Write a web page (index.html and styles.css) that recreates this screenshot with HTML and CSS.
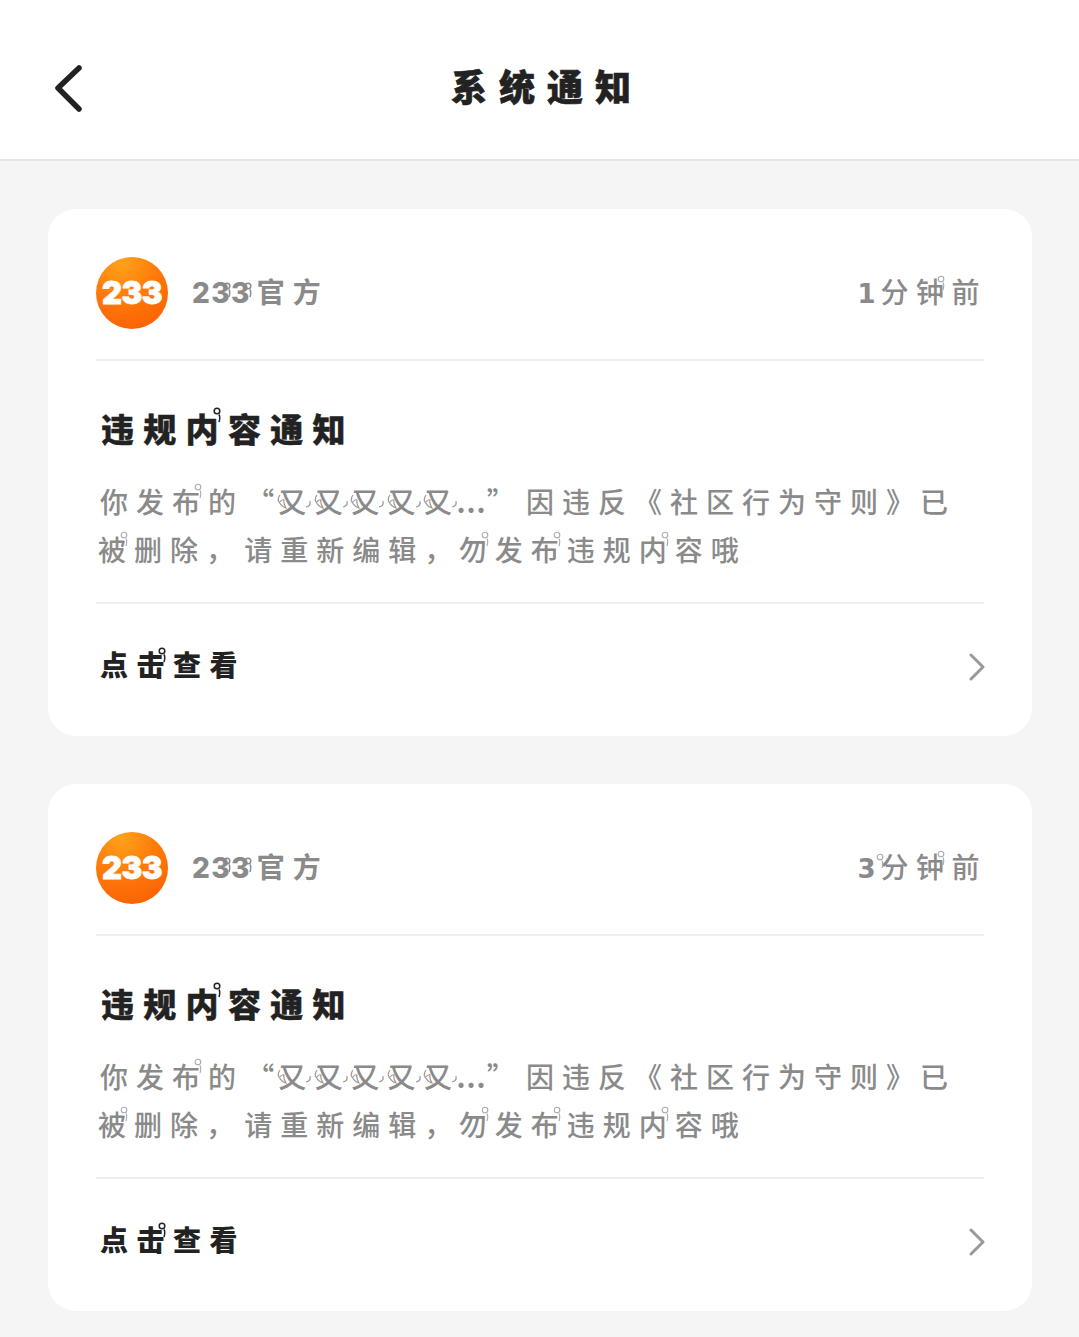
FILE: index.html
```html
<!DOCTYPE html>
<html lang="zh-CN">
<head>
<meta charset="utf-8">
<title>系统通知</title>
<link rel="stylesheet" href="styles.css">
</head>
<body>
<svg class="defs" width="0" height="0" aria-hidden="true">
  <symbol id="flower" viewBox="0 0 10 16">
    <circle cx="5" cy="4" r="2.8" fill="none" stroke="currentColor"/>
    <path d="M7 7.5 Q8.5 10 7 15" fill="none" stroke="currentColor"/>
  </symbol>
  <symbol id="swirl" viewBox="0 0 36 24">
    <path d="M3 2 Q0 6 2 9 Q5 14 9 15 Q6 10 7 7 Q5 6 3 9" fill="none" stroke="#999" stroke-width="1.2"/>
    <path d="M29 14 Q34 13 33 8" fill="none" stroke="#999" stroke-width="1.2"/>
  </symbol>
</svg>

<header class="topbar">
  <svg class="back" width="34" height="50" viewBox="0 0 34 50"><path d="M27 5 L6 25 L27 46" fill="none" stroke="#222" stroke-width="5.5" stroke-linecap="round" stroke-linejoin="round"/></svg>
  <h1 class="page-title">系统通知</h1>
</header>

<main class="list">
  <article class="card">
    <div class="card-head">
      <div class="logo">233</div>
      <div class="source"><span class="digits">23<i class="deco d-src1"><svg><use href="#flower"/></svg></i>3<i class="deco d-src2"><svg><use href="#flower"/></svg></i></span>官方</div>
      <div class="time"><span class="num">1</span>分钟<i class="deco d-time"><svg><use href="#flower"/></svg></i>前</div>
    </div>
    <div class="card-body">
      <h2 class="notice-title">违规内<i class="deco d-title"><svg><use href="#flower"/></svg></i>容通知</h2>
      <p class="notice-text">你发布<i class="deco d-text"><svg><use href="#flower"/></svg></i>的 <span class="quote-open">“</span><span class="yo"><i class="deco d-swirl"><svg><use href="#swirl"/></svg></i>又</span><span class="yo"><i class="deco d-swirl"><svg><use href="#swirl"/></svg></i>又</span><span class="yo"><i class="deco d-swirl"><svg><use href="#swirl"/></svg></i>又</span><span class="yo"><i class="deco d-swirl"><svg><use href="#swirl"/></svg></i>又</span><span class="yo yo-last"><i class="deco d-swirl"><svg><use href="#swirl"/></svg></i>又</span><span class="dots">...</span><span class="quote-close">”</span> 因违反《社区行为守则<span class="bracket">》</span>已<br><span class="line2">被<i class="deco d-text"><svg><use href="#flower"/></svg></i>删除， 请重新编辑<span class="comma">，</span> 勿<i class="deco d-text"><svg><use href="#flower"/></svg></i>发布<i class="deco d-text"><svg><use href="#flower"/></svg></i>违规内<i class="deco d-text"><svg><use href="#flower"/></svg></i>容哦</span></p>
    </div>
    <div class="card-foot">
      <span class="action">点击<i class="deco d-action"><svg><use href="#flower"/></svg></i>查看</span>
      <svg class="chev" width="18" height="28" viewBox="0 0 18 28"><path d="M3 2 L15 14 L3 26" fill="none" stroke="#999" stroke-width="3" stroke-linecap="round" stroke-linejoin="round"/></svg>
    </div>
  </article>

  <article class="card">
    <div class="card-head">
      <div class="logo">233</div>
      <div class="source"><span class="digits">23<i class="deco d-src1"><svg><use href="#flower"/></svg></i>3<i class="deco d-src2"><svg><use href="#flower"/></svg></i></span>官方</div>
      <div class="time"><span class="num">3<i class="deco d-num"><svg><use href="#flower"/></svg></i></span>分钟<i class="deco d-time"><svg><use href="#flower"/></svg></i>前</div>
    </div>
    <div class="card-body">
      <h2 class="notice-title">违规内<i class="deco d-title"><svg><use href="#flower"/></svg></i>容通知</h2>
      <p class="notice-text">你发布<i class="deco d-text"><svg><use href="#flower"/></svg></i>的 <span class="quote-open">“</span><span class="yo"><i class="deco d-swirl"><svg><use href="#swirl"/></svg></i>又</span><span class="yo"><i class="deco d-swirl"><svg><use href="#swirl"/></svg></i>又</span><span class="yo"><i class="deco d-swirl"><svg><use href="#swirl"/></svg></i>又</span><span class="yo"><i class="deco d-swirl"><svg><use href="#swirl"/></svg></i>又</span><span class="yo yo-last"><i class="deco d-swirl"><svg><use href="#swirl"/></svg></i>又</span><span class="dots">...</span><span class="quote-close">”</span> 因违反《社区行为守则<span class="bracket">》</span>已<br><span class="line2">被<i class="deco d-text"><svg><use href="#flower"/></svg></i>删除， 请重新编辑<span class="comma">，</span> 勿<i class="deco d-text"><svg><use href="#flower"/></svg></i>发布<i class="deco d-text"><svg><use href="#flower"/></svg></i>违规内<i class="deco d-text"><svg><use href="#flower"/></svg></i>容哦</span></p>
    </div>
    <div class="card-foot">
      <span class="action">点击<i class="deco d-action"><svg><use href="#flower"/></svg></i>查看</span>
      <svg class="chev" width="18" height="28" viewBox="0 0 18 28"><path d="M3 2 L15 14 L3 26" fill="none" stroke="#999" stroke-width="3" stroke-linecap="round" stroke-linejoin="round"/></svg>
    </div>
  </article>
</main>
</body>
</html>
```

FILE: styles.css
```css
* { box-sizing: border-box; }
html, body { margin: 0; padding: 0; }
body {
  width: 1079px;
  height: 1337px;
  overflow: hidden;
  background: #f5f5f5;
  font-family: "Noto Sans CJK SC", "Noto Sans", sans-serif;
}
.defs { position: absolute; }

.topbar {
  position: relative;
  height: 161px;
  padding-top: 10px;
  background: #fff;
  border-bottom: 2px solid #e6e6e6;
  display: flex;
  align-items: center;
  justify-content: center;
}
.back { position: absolute; left: 52px; top: 63px; }
.page-title {
  margin: 0 0 0 15px;
  font-size: 36px;
  line-height: 50px;
  font-weight: 900;
  letter-spacing: 12px;
  color: #222;
  -webkit-text-stroke: 0.6px #222;
}

.list {
  padding: 48px 47px 0 48px;
  display: flex;
  flex-direction: column;
  gap: 48px;
}
.card {
  height: 527px;
  background: #fff;
  border-radius: 28px;
  padding: 48px 48px 0;
}
.card-head {
  display: flex;
  align-items: center;
  height: 104px;
  padding-bottom: 30px;
  border-bottom: 2px solid #eee;
}
.logo {
  width: 72px;
  height: 72px;
  flex: none;
  border-radius: 50%;
  background: radial-gradient(circle at 35% 8%, #ffa21a 0%, #ff7a0a 45%, #f95a00 100%);
  color: #fff;
  font-family: Inter, "Noto Sans", sans-serif;
  font-weight: 900;
  font-size: 31px;
  line-height: 72px;
  text-align: center;
  letter-spacing: -0.5px;
  -webkit-text-stroke: 0.8px #fff;
}
.source {
  margin-left: 24px;
  margin-top: -2px;
  font-size: 28px;
  line-height: 40px;
  font-weight: 700;
  letter-spacing: 8px;
  color: #8a8a8a;
}
.digits {
  font-family: Inter, sans-serif;
  font-weight: 800;
  letter-spacing: 1.4px;
  margin-right: 6px;
}
.time {
  margin-left: auto;
  margin-right: -3px;
  margin-top: -1px;
  font-size: 28px;
  line-height: 40px;
  font-weight: 500;
  letter-spacing: 7.5px;
  color: #8a8a8a;
}
.num { font-family: "DejaVu Sans", sans-serif; font-weight: 700; font-size: 26px; letter-spacing: 5px; }

.card-body {
  height: 243px;
  padding: 44px 0 0 5px;
  border-bottom: 2px solid #eee;
}
.notice-title {
  margin: 0;
  font-size: 33px;
  line-height: 46px;
  font-weight: 900;
  letter-spacing: 9.3px;
  color: #222;
  -webkit-text-stroke: 0.4px #222;
}
.notice-text {
  margin: 26px 0 0 -1px;
  font-size: 28px;
  line-height: 48px;
  font-weight: 500;
  letter-spacing: 8px;
  word-spacing: -12px;
  color: #8a8a8a;
  white-space: nowrap;
}
.quote-open { letter-spacing: 4px; }
.quote-close { letter-spacing: 0; margin-right: 9px; }
.bracket { letter-spacing: 6px; }
.comma { letter-spacing: 4px; }
.yo { letter-spacing: 8.4px; }
.yo-last { letter-spacing: 4.4px; }
.dots { font-weight: 700; letter-spacing: 1px; }
.line2 { margin-left: -2px; }

.card-foot {
  display: flex;
  align-items: center;
  justify-content: space-between;
  height: 127px;
  padding: 0 0 6px 4px;
}
.action {
  margin-top: -2px;
  font-size: 28px;
  font-weight: 900;
  letter-spacing: 8.5px;
  color: #222;
  line-height: 40px;
}
.chev { margin-right: -2px; margin-top: 5px; }

.deco { position: relative; display: inline-block; width: 0; height: 0; font-style: normal; color: #8a8a8a; }
.deco svg { position: absolute; width: 10px; height: 16px; overflow: visible; stroke-width: 1.5; }
.d-src1 svg { left: -9px; top: -21px; }
.d-src2 svg { left: -8px; top: -21px; }
.d-time svg { left: -15px; top: -28px; color: #aaa; stroke-width: 1.1; }
.d-num svg { left: -5px; top: -25px; stroke-width: 1.1; color: #aaa; }
.d-title { color: #222; }
.d-title svg { left: -16px; top: -35px; }
.d-text { color: #aaa; }
.d-text svg { left: -15px; top: -30px; stroke-width: 1.1; }
.d-action { color: #222; }
.d-action svg { left: -16px; top: -29px; }
.d-swirl svg { left: -1px; top: -20px; width: 36px; height: 24px; }
```
